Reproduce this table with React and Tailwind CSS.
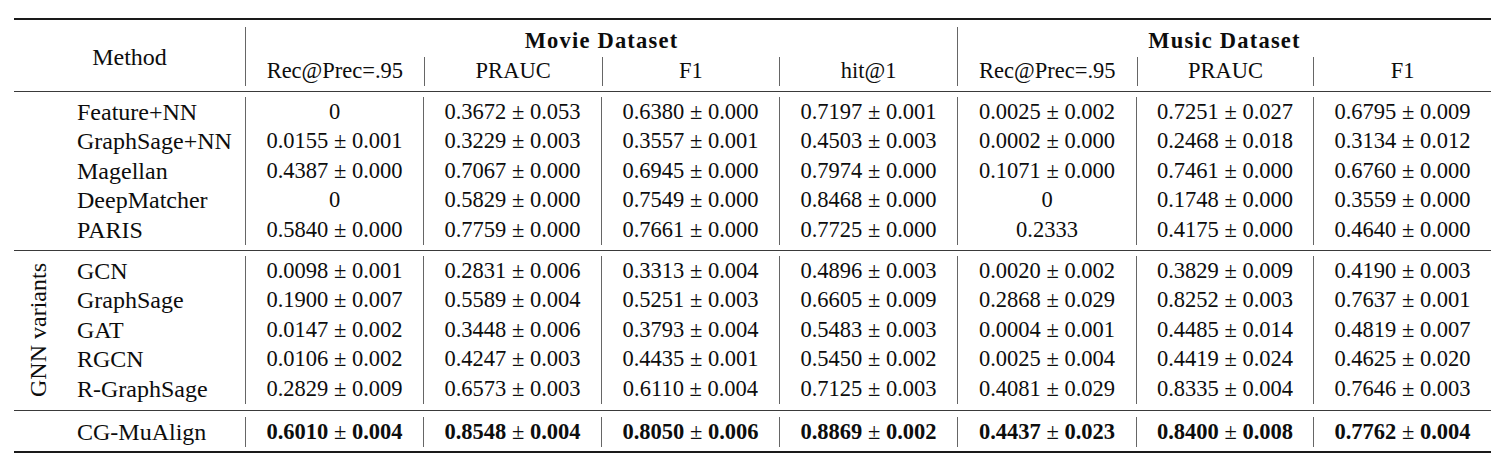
import React from "react";

const widths = ["w-[178px]", "w-[178px]", "w-[178px]", "w-[178px]", "w-[179px]", "w-[177px]", "w-[178px]"];

const baselines = [
  ["Feature+NN", "0", "0.3672 ± 0.053", "0.6380 ± 0.000", "0.7197 ± 0.001", "0.0025 ± 0.002", "0.7251 ± 0.027", "0.6795 ± 0.009"],
  ["GraphSage+NN", "0.0155 ± 0.001", "0.3229 ± 0.003", "0.3557 ± 0.001", "0.4503 ± 0.003", "0.0002 ± 0.000", "0.2468 ± 0.018", "0.3134 ± 0.012"],
  ["Magellan", "0.4387 ± 0.000", "0.7067 ± 0.000", "0.6945 ± 0.000", "0.7974 ± 0.000", "0.1071 ± 0.000", "0.7461 ± 0.000", "0.6760 ± 0.000"],
  ["DeepMatcher", "0", "0.5829 ± 0.000", "0.7549 ± 0.000", "0.8468 ± 0.000", "0", "0.1748 ± 0.000", "0.3559 ± 0.000"],
  ["PARIS", "0.5840 ± 0.000", "0.7759 ± 0.000", "0.7661 ± 0.000", "0.7725 ± 0.000", "0.2333", "0.4175 ± 0.000", "0.4640 ± 0.000"],
];

const gnnVariants = [
  ["GCN", "0.0098 ± 0.001", "0.2831 ± 0.006", "0.3313 ± 0.004", "0.4896 ± 0.003", "0.0020 ± 0.002", "0.3829 ± 0.009", "0.4190 ± 0.003"],
  ["GraphSage", "0.1900 ± 0.007", "0.5589 ± 0.004", "0.5251 ± 0.003", "0.6605 ± 0.009", "0.2868 ± 0.029", "0.8252 ± 0.003", "0.7637 ± 0.001"],
  ["GAT", "0.0147 ± 0.002", "0.3448 ± 0.006", "0.3793 ± 0.004", "0.5483 ± 0.003", "0.0004 ± 0.001", "0.4485 ± 0.014", "0.4819 ± 0.007"],
  ["RGCN", "0.0106 ± 0.002", "0.4247 ± 0.003", "0.4435 ± 0.001", "0.5450 ± 0.002", "0.0025 ± 0.004", "0.4419 ± 0.024", "0.4625 ± 0.020"],
  ["R-GraphSage", "0.2829 ± 0.009", "0.6573 ± 0.003", "0.6110 ± 0.004", "0.7125 ± 0.003", "0.4081 ± 0.029", "0.8335 ± 0.004", "0.7646 ± 0.003"],
];

const ours = ["CG-MuAlign", "0.6010 ± 0.004", "0.8548 ± 0.004", "0.8050 ± 0.006", "0.8869 ± 0.002", "0.4437 ± 0.023", "0.8400 ± 0.008", "0.7762 ± 0.004"];

// value with optional bold digits, the ± stays regular like in the paper
const Value = ({ text, bold }) => {
  const parts = text.split(" ± ");
  if (parts.length === 1) return bold ? <b>{text}</b> : <span>{text}</span>;
  if (!bold) return <span>{text}</span>;
  return (
    <span>
      <b>{parts[0]}</b> ± <b>{parts[1]}</b>
    </span>
  );
};

const Row = ({ row, bold }) => (
  <div className="flex h-[29.5px]">
    <div className="w-[168px] flex items-center text-[24px]">{row[0]}</div>
    {row.slice(1).map((v, i) => (
      <div
        key={i}
        className={`${widths[i]} flex items-center justify-center border-l border-[#666] whitespace-nowrap`}
      >
        <Value text={v} bold={bold} />
      </div>
    ))}
  </div>
);

const Rule = ({ thick }) => (
  <div className={thick ? "h-[2px] bg-[#1a1a1a]" : "h-px bg-[#3a3a3a]"} />
);

const App = () => {
  return (
    <div
      className="w-[1509px] h-[470px] bg-white text-[#0d0d0d] text-[22.5px] leading-none pt-[18px] pl-[14px]"
      style={{ fontFamily: '"Liberation Serif", "Times New Roman", serif' }}
    >
      <div className="w-[1477px]">
        <Rule thick />

        {/* header */}
        <div className="flex pt-[7px] pb-[5px]">
          <div className="w-[231px] flex items-center justify-center text-[24px]">Method</div>
          <div className="w-[712px] border-l border-[#666]">
            <div className="h-[30px] flex items-start justify-center pt-[3px] font-bold tracking-[1.2px]">
              Movie Dataset
            </div>
            <div className="flex h-[29px]">
              {["Rec@Prec=.95", "PRAUC", "F1", "hit@1"].map((h, i) => (
                <div
                  key={h}
                  className={`${widths[i]} flex items-center justify-center ${i > 0 ? "border-l border-[#666]" : ""}`}
                >
                  {h}
                </div>
              ))}
            </div>
          </div>
          <div className="w-[534px] border-l border-[#666]">
            <div className="h-[30px] flex items-start justify-center pt-[3px] font-bold tracking-[1.2px]">
              Music Dataset
            </div>
            <div className="flex h-[29px]">
              {["Rec@Prec=.95", "PRAUC", "F1"].map((h, i) => (
                <div
                  key={h}
                  className={`${widths[i + 4]} flex items-center justify-center ${i > 0 ? "border-l border-[#666]" : ""}`}
                >
                  {h}
                </div>
              ))}
            </div>
          </div>
        </div>
        <Rule />

        {/* baselines */}
        <div className="flex pt-[5px] pb-[5.5px]">
          <div className="w-[63px]" />
          <div>
            {baselines.map((r) => (
              <Row key={r[0]} row={r} />
            ))}
          </div>
        </div>
        <Rule />

        {/* gnn variants */}
        <div className="flex pt-[5px] pb-[6.5px]">
          <div className="w-[63px] flex items-center pl-[11px]">
            <div className="[writing-mode:vertical-rl] rotate-180 leading-[26px] text-[24px]">GNN variants</div>
          </div>
          <div>
            {gnnVariants.map((r) => (
              <Row key={r[0]} row={r} />
            ))}
          </div>
        </div>
        <Rule />

        {/* our model */}
        <div className="flex pt-[6px] pb-[4.5px]">
          <div className="w-[63px]" />
          <div>
            <Row row={ours} bold />
          </div>
        </div>
        <Rule thick />
      </div>
    </div>
  );
};

export default App;
